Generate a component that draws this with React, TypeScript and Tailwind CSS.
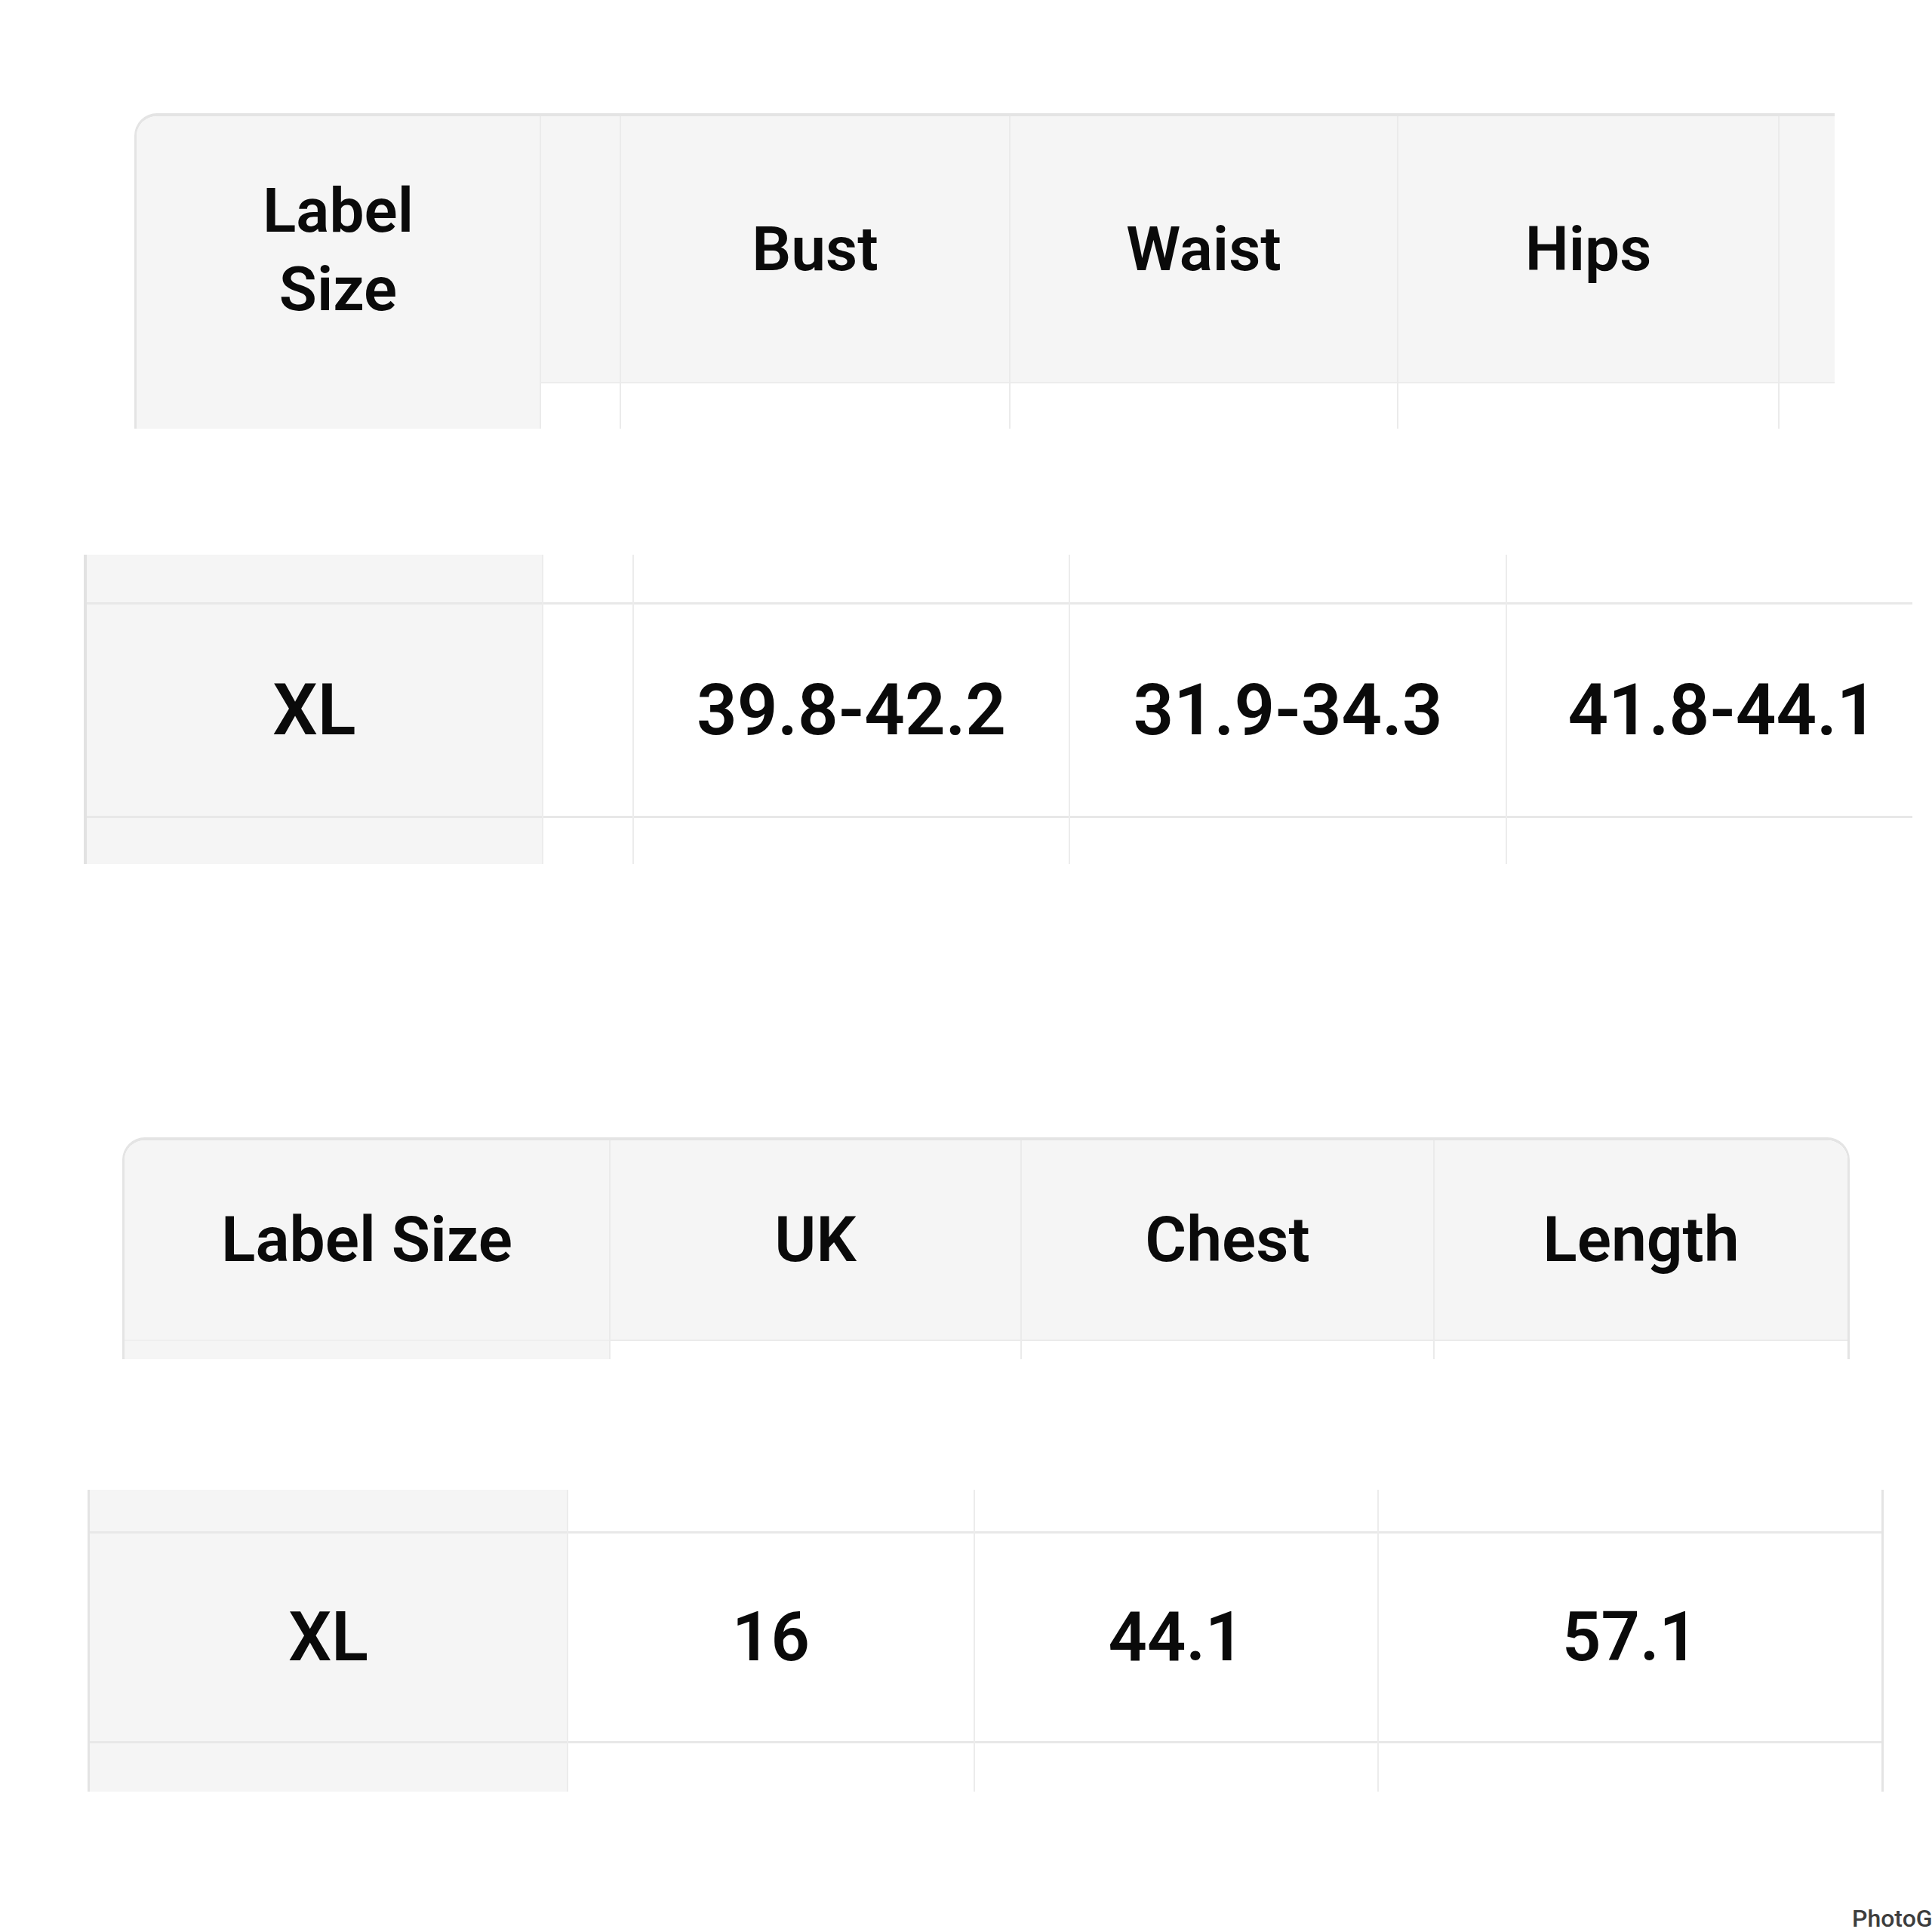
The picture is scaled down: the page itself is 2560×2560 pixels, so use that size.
import React from "react";

function HeaderBlockCol({ w, text, first, gray }: { w: string; text?: React.ReactNode; first?: boolean; gray?: boolean }) {
  return (
    <div className={`${w} flex flex-col ${first ? "" : "border-l-2 border-[#ebebeb]"} ${gray ? "bg-[#f5f5f5]" : ""}`}>
      <div className="h-[354px] shrink-0 bg-[#f5f5f5] border-b-2 border-[#ececec] flex items-center justify-center text-center text-[82px] leading-[104px]">
        {text}
      </div>
      <div className="flex-1" />
    </div>
  );
}

function RowCol({ w, text, first, gray, shift }: { w: string; text: string; first?: boolean; gray?: boolean; shift?: string }) {
  return (
    <div className={`${w} flex flex-col ${first ? "" : "border-l-2 border-[#ececec]"} ${gray ? "bg-[#f5f5f5]" : "bg-white"}`}>
      <div className="h-[63px] shrink-0" />
      <div className={`h-[283px] shrink-0 border-t-[3px] border-[#e8e8e8] flex items-center justify-center text-[94px] ${shift ?? ""}`}>
        {text}
      </div>
      <div className="flex-1 border-t-[3px] border-[#e8e8e8]" />
    </div>
  );
}

function Row2Col({ w, text, first, gray }: { w: string; text: string; first?: boolean; gray?: boolean }) {
  return (
    <div className={`${w} flex flex-col ${first ? "" : "border-l-2 border-[#ececec]"} ${gray ? "bg-[#f5f5f5]" : "bg-white"}`}>
      <div className="h-[55px] shrink-0" />
      <div className="h-[278px] shrink-0 border-t-[3px] border-[#e8e8e8] flex items-center justify-center text-[90px]">
        {text}
      </div>
      <div className="flex-1 border-t-[3px] border-[#e8e8e8]" />
    </div>
  );
}

function Header2Col({ w, text, first }: { w: string; text: string; first?: boolean }) {
  return (
    <div className={`${w} flex flex-col ${first ? "bg-[#f5f5f5]" : "border-l-2 border-[#ebebeb] bg-white"}`}>
      <div className={`h-[266px] shrink-0 bg-[#f5f5f5] border-b-2 ${first ? "border-[#efefef]" : "border-[#ebebeb]"} flex items-center justify-center text-[84px]`}>
        {text}
      </div>
      <div className="flex-1" />
    </div>
  );
}

export default function App() {
  return (
    <div className="relative w-[2560px] h-[2560px] overflow-hidden bg-white font-['Roboto','Liberation_Sans',Arial,sans-serif] font-semibold text-[#0a0a0a]">
      <div className="flex flex-col">
        {/* Table 1 header */}
        <div className="ml-[178px] mt-[150px] flex w-[2253px] h-[418px] rounded-tl-[30px] border-t-4 border-l-[3px] border-[#e4e4e4] overflow-hidden">
          <div className="w-[534px] bg-[#f5f5f5] flex flex-col">
            <div className="h-[354px] shrink-0 flex items-center justify-center text-center text-[82px] leading-[104px]">
              Label
              <br />
              Size
            </div>
          </div>
          <HeaderBlockCol w="w-[106px]" />
          <HeaderBlockCol w="w-[516px]" text="Bust" />
          <HeaderBlockCol w="w-[514px]" text="Waist" />
          <HeaderBlockCol w="w-[505px]" text="Hips" />
          <HeaderBlockCol w="w-[75px]" />
        </div>

        {/* Table 1 row */}
        <div className="ml-[111px] mt-[167px] flex w-[2423px] h-[410px] border-l-4 border-[#e2e2e2]">
          <RowCol w="w-[603px]" text="XL" first gray />
          <RowCol w="w-[120px]" text="" />
          <RowCol w="w-[578px]" text="39.8-42.2" />
          <RowCol w="w-[579px]" text="31.9-34.3" />
          <RowCol w="w-[539px]" text="41.8-44.1" shift="pl-[34px]" />
        </div>

        {/* Table 2 header */}
        <div className="ml-[162px] mt-[362px] flex w-[2289px] h-[294px] rounded-t-[30px] border-t-4 border-x-[3px] border-[#e4e4e4] overflow-hidden">
          <Header2Col w="w-[642px]" text="Label Size" first />
          <Header2Col w="w-[545px]" text="UK" />
          <Header2Col w="w-[547px]" text="Chest" />
          <Header2Col w="w-[549px]" text="Length" />
        </div>

        {/* Table 2 row */}
        <div className="ml-[116px] mt-[173px] flex w-[2380px] h-[400px] border-x-[3px] border-[#e4e4e4]">
          <Row2Col w="w-[632px]" text="XL" first gray />
          <Row2Col w="w-[539px]" text="16" />
          <Row2Col w="w-[535px]" text="44.1" />
          <Row2Col w="w-[668px]" text="57.1" />
        </div>
      </div>

      <div className="absolute left-[2454px] top-[2518px] whitespace-nowrap text-[32px] font-medium text-[#3d3d3d]">
        PhotoGrid
      </div>
    </div>
  );
}
